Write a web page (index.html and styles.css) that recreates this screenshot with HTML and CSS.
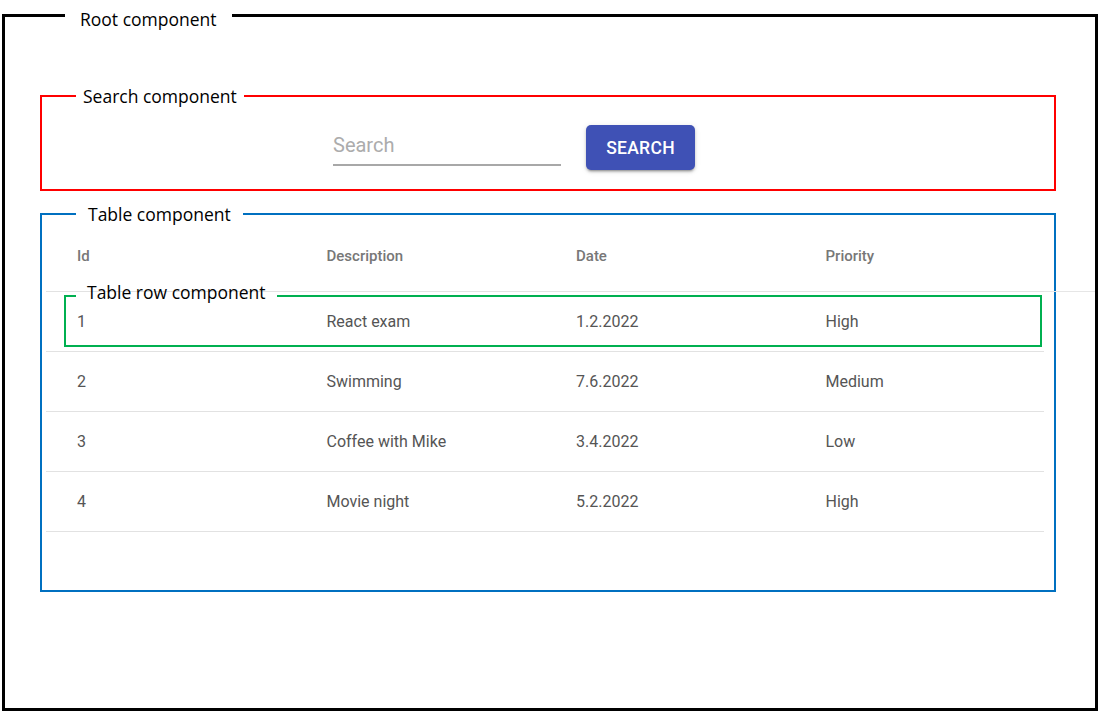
FILE: index.html
```html
<!DOCTYPE html>
<html lang="en">
<head>
<meta charset="utf-8">
<title>Components</title>
<link rel="stylesheet" href="styles.css">
</head>
<body>
<fieldset class="frame root">
  <legend class="frame-label root-label">Root component</legend>

  <fieldset class="frame search">
    <legend class="frame-label search-label">Search component</legend>
    <div class="search-row">
      <div class="search-field"><input class="search-input" type="text" placeholder="Search"></div>
      <button class="search-btn" type="button">Search</button>
    </div>
  </fieldset>

  <fieldset class="frame table-frame">
    <legend class="frame-label table-label">Table component</legend>
    <div class="table">
      <div class="trow thead">
        <div class="cell">Id</div>
        <div class="cell">Description</div>
        <div class="cell">Date</div>
        <div class="cell">Priority</div>
      </div>
      <div class="trow first">
        <fieldset class="frame row-frame">
          <legend class="frame-label row-label">Table row component</legend>
        </fieldset>
        <div class="cell">1</div>
        <div class="cell">React exam</div>
        <div class="cell">1.2.2022</div>
        <div class="cell">High</div>
      </div>
      <div class="trow">
        <div class="cell">2</div>
        <div class="cell">Swimming</div>
        <div class="cell">7.6.2022</div>
        <div class="cell">Medium</div>
      </div>
      <div class="trow">
        <div class="cell">3</div>
        <div class="cell">Coffee with Mike</div>
        <div class="cell">3.4.2022</div>
        <div class="cell">Low</div>
      </div>
      <div class="trow">
        <div class="cell">4</div>
        <div class="cell">Movie night</div>
        <div class="cell">5.2.2022</div>
        <div class="cell">High</div>
      </div>
    </div>
  </fieldset>
</fieldset>
</body>
</html>
```

FILE: styles.css
```css
* { box-sizing: border-box; }

html, body {
  margin: 0;
  padding: 0;
  background: #fff;
}

body {
  font-family: Roboto, "Liberation Sans", sans-serif;
  width: 1100px;
  height: 712px;
  overflow: hidden;
}

.frame {
  margin: 0;
  padding: 0;
  min-width: 0;
}

.frame-label {
  font-family: "Open Sans", "Noto Sans", sans-serif;
  font-size: 17.5px;
  line-height: 22px;
  color: #000;
}

/* Root */
.root {
  margin: 0 2px 0 2px;
  border: 3px solid #000;
  padding: 0 39px 116px 35px;
}
.root-label {
  margin-left: 25px;
  padding: 8px 15px 0 15px;
}

/* Search */
.search {
  margin-top: 55px;
  border: 2px solid #ff0000;
  height: 106px;
}
.search-label {
  margin-left: 34px;
  padding: 0 7px;
}
.search-row {
  display: flex;
  align-items: center;
  gap: 25px;
  padding: 18px 0 0 291px;
}
.search-field {
  width: 228px;
  border-bottom: 2px solid #a8a8a8;
  padding-bottom: 4px;
}
.search-input {
  border: 0;
  outline: 0;
  padding: 0;
  width: 100%;
  font-family: Roboto, sans-serif;
  font-size: 20px;
  line-height: 30px;
  color: #333;
  background: transparent;
}
.search-input::placeholder {
  color: #acacac;
}
.search-btn {
  width: 109px;
  height: 45px;
  border: 0;
  border-radius: 5px;
  background: #3f51b5;
  color: #fff;
  font-family: Roboto, sans-serif;
  font-weight: 500;
  font-size: 17.5px;
  letter-spacing: 0.3px;
  text-transform: uppercase;
  box-shadow: 0 3px 2px -2px rgba(0,0,0,0.25), 0 2px 3px rgba(0,0,0,0.18), 0 1px 6px rgba(0,0,0,0.1);
  margin-top: 0;
}

/* Table */
.table-frame {
  margin-top: 12px;
  border: 2px solid #0070c0;
  padding: 0 10px 58px 4px;
}
.table-label {
  margin-left: 30px;
  padding: 0 12px;
}
.table {
  margin-top: 1px;
  display: grid;
}
.trow {
  display: grid;
  grid-template-columns: repeat(4, 1fr);
  border-bottom: 1px solid #e2e2e2;
  position: relative;
  font-size: 16px;
  line-height: 20px;
  color: #555;
}
.trow .cell {
  padding: 20px 31px 19px;
}
.thead {
  font-size: 15px;
  font-weight: 500;
  color: #777;
}
.thead .cell {
  padding: 20px 31px 25px;
}
.thead::after {
  content: "";
  position: absolute;
  left: 100%;
  bottom: -1px;
  width: 51px;
  height: 1px;
  background: #e6e6e6;
}

/* Table row annotation */
.row-frame {
  position: absolute;
  left: 18px;
  right: 2px;
  top: -11px;
  bottom: 4px;
  border: 2px solid #00b050;
  pointer-events: none;
}
.row-label {
  margin-left: 10px;
  padding: 0 11px 8px;
}
```
